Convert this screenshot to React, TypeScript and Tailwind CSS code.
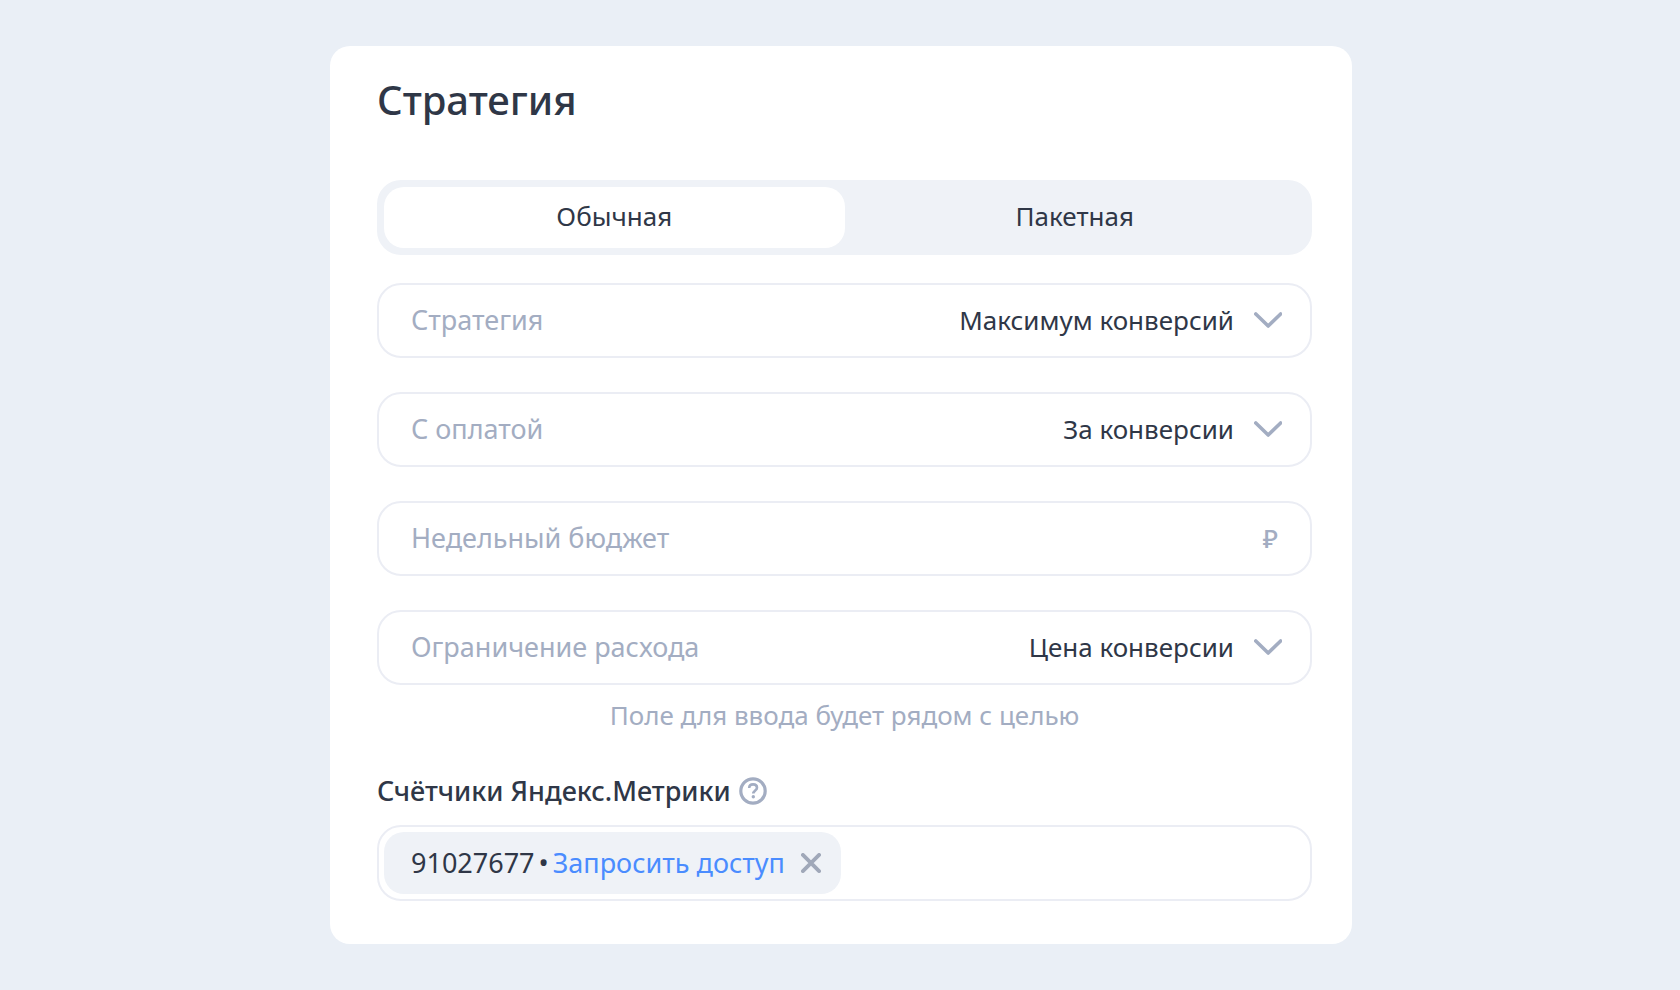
import React, { useState } from "react";

const ChevronIcon = () => (
  <svg className="h-7 w-7 shrink-0" viewBox="0 0 28 28" fill="none" stroke="#a3adc2" strokeWidth="3.6" aria-hidden="true">
    <path d="M1.8 8 L14.2 20 L26.6 8" strokeLinecap="round" strokeLinejoin="round" />
  </svg>
);

const HelpIcon = () => (
  <svg className="h-7 w-7" viewBox="0 0 28 28" fill="none" stroke="#a3adc2" aria-hidden="true">
    <circle cx="14" cy="14" r="12.2" strokeWidth="3.2" />
    <path d="M10.2 11 C10.2 8.5 11.8 7.4 14.1 7.4 C16.5 7.4 18 8.8 18 10.7 C18 13.4 14.3 13.6 14.3 16.6" strokeWidth="2.6" />
    <circle cx="14.3" cy="19.8" r="1.7" fill="#a3adc2" stroke="none" />
  </svg>
);

const CloseIcon = () => (
  <svg className="h-5 w-5" viewBox="0 0 20 20" fill="none" stroke="#a0a8b9" strokeWidth="3.8" aria-hidden="true">
    <path d="M1.9 1.9 L18.1 18.1 M18.1 1.9 L1.9 18.1" strokeLinecap="round" />
  </svg>
);

type SelectFieldProps = {
  id: string;
  label: string;
  options: string[];
};

const SelectField = ({ id, label, options }: SelectFieldProps) => {
  const [value, setValue] = useState<string>(options[0]);

  return (
    <div className="flex h-[75px] items-center rounded-3xl border-2 border-[#ebedf4] pr-7 pb-0.5 pl-8">
      <label htmlFor={id} className="shrink-0 text-[#a3adc2]">
        {label}
      </label>
      <select
        id={id}
        value={value}
        onChange={(e) => setValue(e.target.value)}
        className="mr-5 h-full min-w-0 flex-1 appearance-none bg-transparent text-[26px] [text-align-last:right] outline-none"
      >
        {options.map((option) => (
          <option key={option}>{option}</option>
        ))}
      </select>
      <ChevronIcon />
    </div>
  );
};

const tabs = ["Обычная", "Пакетная"];

const App = () => {
  const [tab, setTab] = useState<string>("Обычная");
  const [budget, setBudget] = useState<string>("");
  const [hasCounter, setHasCounter] = useState<boolean>(true);

  return (
    <div className="min-h-screen bg-[#eaeff6] py-[46px] pr-4 pl-[18px] font-['Noto_Sans',sans-serif] text-[27px] leading-9 text-[#2f3747]">
      <main className="mx-auto max-w-[1022px] rounded-[20px] bg-white pt-[30px] pr-10 pb-[43px] pl-[47px]">
        <h1 className="text-[40px] leading-12 font-medium">Стратегия</h1>

        {/* Strategy type */}
        <div className="mt-14 flex h-[75px] rounded-3xl bg-[#eff2f7] p-[7px] text-[26px]">
          {tabs.map((name) => (
            <button
              key={name}
              type="button"
              aria-pressed={tab === name}
              onClick={() => setTab(name)}
              className={tab === name ? "flex-1 rounded-[20px] bg-white pb-1" : "flex-1 rounded-[20px] pb-1"}
            >
              {name}
            </button>
          ))}
        </div>

        <div className="mt-7 flex flex-col gap-[34px]">
          <SelectField id="strategy" label="Стратегия" options={["Максимум конверсий"]} />
          <SelectField id="payment" label="С оплатой" options={["За конверсии"]} />
          <div className="flex h-[75px] items-center rounded-3xl border-2 border-[#ebedf4] pr-8 pb-0.5 pl-8 text-[#a3adc2]">
            <input
              type="text"
              aria-label="Недельный бюджет"
              placeholder="Недельный бюджет"
              value={budget}
              onChange={(e) => setBudget(e.target.value)}
              className="h-full min-w-0 flex-1 bg-transparent text-[#2f3747] outline-none placeholder:text-[#a3adc2]"
            />
            <span className="text-[26px] font-medium">₽</span>
          </div>
          <SelectField id="limit" label="Ограничение расхода" options={["Цена конверсии"]} />
        </div>
        <p className="mt-3 text-center text-[26px] text-[#a3adc2]">Поле для ввода будет рядом с целью</p>

        {/* Metrica counters */}
        <div className="mt-10 flex items-center gap-2">
          <h2 className="font-medium">Счётчики Яндекс.Метрики</h2>
          <button type="button" aria-label="Справка">
            <HelpIcon />
          </button>
        </div>
        <div className="mt-4 flex h-[76px] items-center rounded-3xl border-2 border-[#ebedf4] p-[5px]">
          {hasCounter && (
            <div className="flex h-full items-center gap-1 rounded-[20px] bg-[#eff2f7] pr-5 pl-[27px]">
              <span>91027677</span>
              <span>•</span>
              <a href="#access" className="text-[#4a8cff]">
                Запросить доступ
              </a>
              <button type="button" aria-label="Удалить" className="ml-3" onClick={() => setHasCounter(false)}>
                <CloseIcon />
              </button>
            </div>
          )}
        </div>
      </main>
    </div>
  );
};

export default App;
